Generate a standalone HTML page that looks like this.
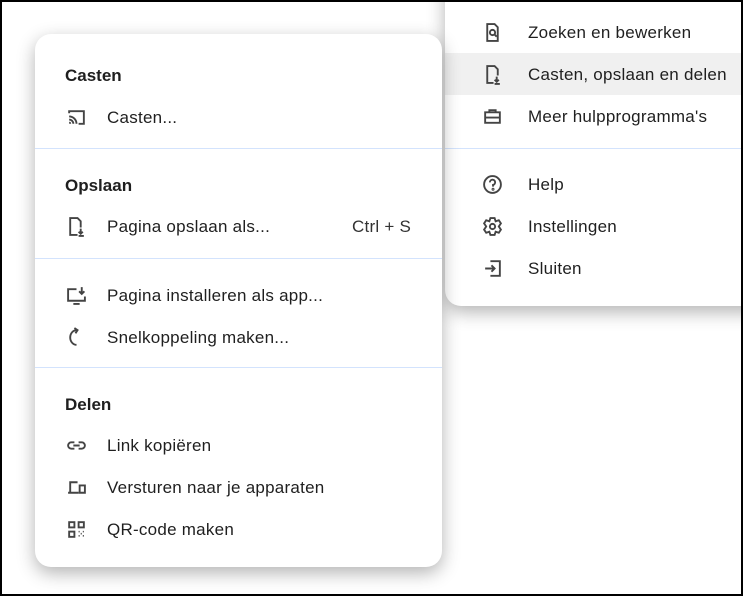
<!DOCTYPE html>
<html><head><meta charset="utf-8"><style>
*{margin:0;padding:0;box-sizing:border-box}
html,body{width:743px;height:596px;overflow:hidden;background:#fff}
body{position:relative;font-family:"Liberation Sans",sans-serif;color:#1f1f1f;font-size:17px;letter-spacing:0.25px}
.frame{position:absolute;left:0;top:0;width:743px;height:596px;border:2px solid #000;z-index:10;pointer-events:none}
.menu{position:absolute;background:#fff;box-shadow:0 6px 18px rgba(0,0,0,.3)}
.r{left:445px;top:-20px;width:320px;height:326px;border-radius:0 0 0 16px}
.l{left:35px;top:34px;width:407px;height:533px;border-radius:16px}
.it{position:absolute;left:0;right:0;height:42px;display:flex;align-items:center}
.it svg{position:absolute;width:21px;height:21px;fill:none;stroke:#444;stroke-width:1.8}
.it span{position:absolute;white-space:nowrap;top:12px}
.h{position:absolute;left:30px;font-weight:bold;font-size:17px;letter-spacing:0}
.sep{position:absolute;left:0;right:0;height:1px;background:#d3e3fd}
.r .it svg{left:37px}.r .it span{left:83px}
.l .it svg{left:31px}.l .it span{left:72px}
</style></head><body>
<div class="frame"></div>
<div class="menu r">
<div class="it" style="top:31px"><svg viewBox="0 0 20 20"><path d="M5 2h7l3 3v13H5z"/><circle cx="10" cy="10" r="2.5"/><path d="M12 12l2 2"/></svg><span>Zoeken en bewerken</span></div>
<div class="it" style="top:73px;background:#f0f0f0"><svg viewBox="0 0 20 20"><path d="M11 18H5V2h7l3 3v6"/><path d="M14 12v5M12 15l2 2 2-2M12 19h5"/></svg><span>Casten, opslaan en delen</span></div>
<div class="it" style="top:115px"><svg viewBox="0 0 20 20"><rect x="3" y="6" width="14" height="10"/><path d="M7 6V4h6v2M3 11h14"/></svg><span>Meer hulpprogramma's</span></div>
<div class="sep" style="top:168px"></div>
<div class="it" style="top:183px"><svg viewBox="0 0 20 20"><circle cx="10" cy="10" r="8"/><path d="M7.5 8a2.5 2.5 0 1 1 3 2.4V12"/><circle cx="10.5" cy="14.5" r=".5"/></svg><span>Help</span></div>
<div class="it" style="top:225px"><svg viewBox="0 0 20 20"><path d="M8 2h4l1 3 3-1 2 3-2 3 2 3-2 3-3-1-1 3H8l-1-3-3 1-2-3 2-3-2-3 2-3 3 1z"/><circle cx="10" cy="10" r="2.5"/></svg><span>Instellingen</span></div>
<div class="it" style="top:267px"><svg viewBox="0 0 20 20"><path d="M8 3h9v14H8M3 10h9M9 7l3 3-3 3"/></svg><span>Sluiten</span></div>
</div>
<div class="menu l">
<div class="h" style="top:32px">Casten</div>
<div class="it" style="top:62px"><svg viewBox="0 0 20 20"><path d="M3 6V4h14v12h-5M3 9a7 7 0 0 1 7 7M3 12a4 4 0 0 1 4 4M3 15a1 1 0 0 1 1 1"/></svg><span>Casten...</span></div>
<div class="sep" style="top:114px"></div>
<div class="h" style="top:142px">Opslaan</div>
<div class="it" style="top:171px"><svg viewBox="0 0 20 20"><path d="M11 18H4V2h7l3 3v6"/><path d="M14 12v5M12 15l2 2 2-2M12 19h5"/></svg><span>Pagina opslaan als...</span><span style="left:317px;color:#333">Ctrl + S</span></div>
<div class="sep" style="top:224px"></div>
<div class="it" style="top:240px"><svg viewBox="0 0 20 20"><path d="M10 4H2v11h16v-4M7 18h6M15 2v6M12.5 6l2.5 2.5L17.5 6"/></svg><span>Pagina installeren als app...</span></div>
<div class="it" style="top:282px"><svg viewBox="0 0 20 20"><path d="M10 3a6 7 0 0 0 0 14M8 1l3 2-2 3"/></svg><span>Snelkoppeling maken...</span></div>
<div class="sep" style="top:333px"></div>
<div class="h" style="top:361px">Delen</div>
<div class="it" style="top:390px"><svg viewBox="0 0 20 20"><path d="M8 7H5a3 3 0 0 0 0 6h3M12 7h3a3 3 0 0 1 0 6h-3M7 10h6"/></svg><span>Link kopiëren</span></div>
<div class="it" style="top:432px"><svg viewBox="0 0 20 20"><path d="M11 5H4v9M2 15h10M13 8h5v7h-5z"/></svg><span>Versturen naar je apparaten</span></div>
<div class="it" style="top:474px"><svg viewBox="0 0 20 20"><rect x="3" y="3" width="5" height="5"/><rect x="12" y="3" width="5" height="5"/><rect x="3" y="12" width="5" height="5"/><path d="M12 12h1M16 12h1M14 14h1M12 16h1M16 16h1" stroke-width="1.5"/></svg><span>QR-code maken</span></div>
</div>
</body></html>
